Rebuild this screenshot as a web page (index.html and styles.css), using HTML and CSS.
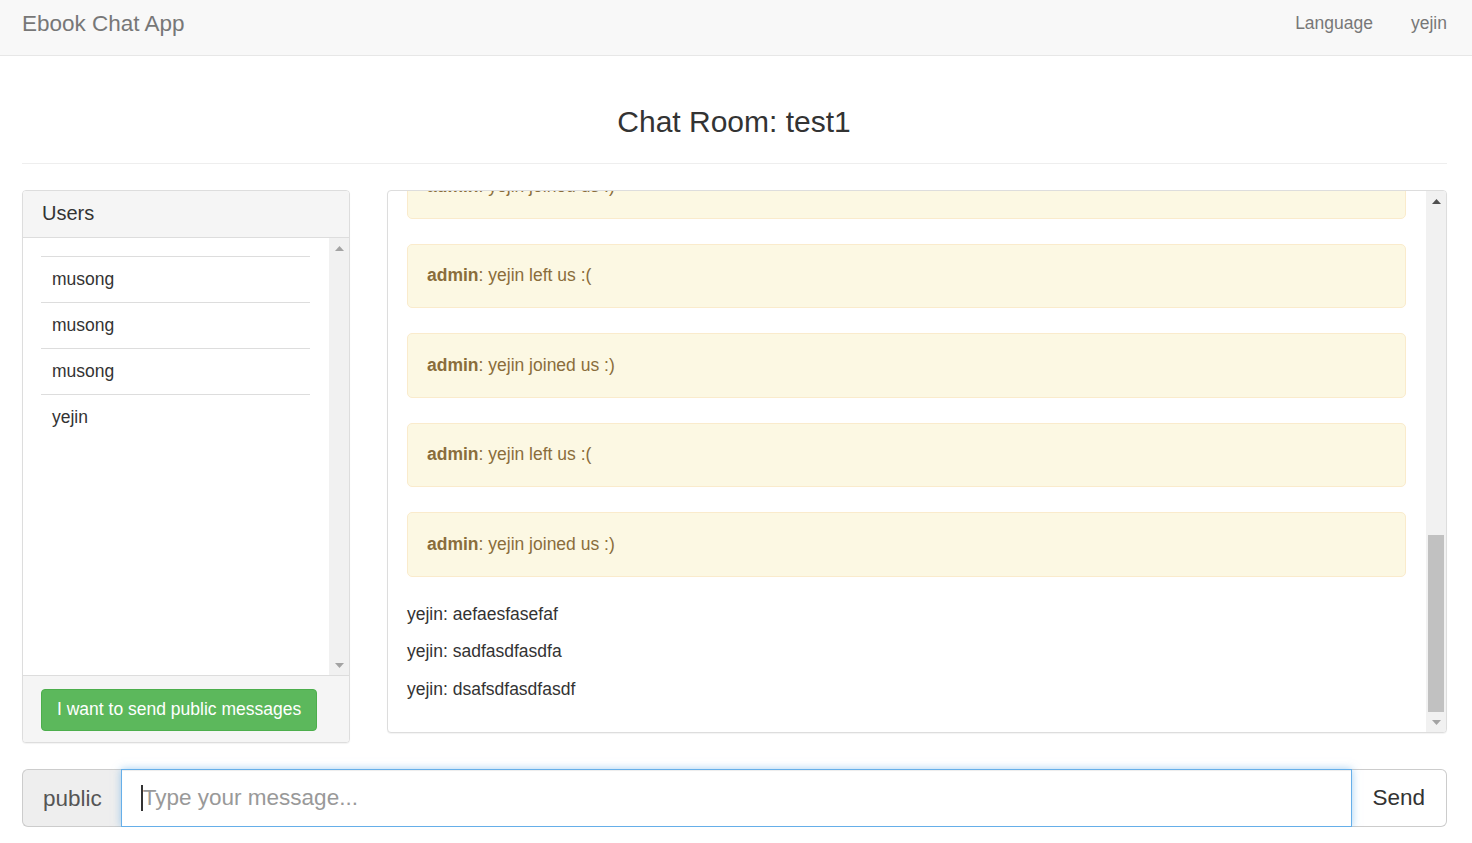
FILE: index.html
```html
<!DOCTYPE html>
<html lang="en">
<head>
<meta charset="utf-8">
<title>Ebook Chat App</title>
<link rel="stylesheet" href="styles.css">
</head>
<body>
<nav class="navbar">
  <a class="brand" href="#">Ebook Chat App</a>
  <ul class="nav-right">
    <li><a href="#">Language</a></li>
    <li><a href="#">yejin</a></li>
  </ul>
</nav>

<main class="page">
  <h3 class="room-title">Chat Room: test1</h3>
  <hr class="divider">

  <div class="chat-row">
    <section class="users-panel">
      <div class="panel-heading">Users</div>
      <div class="users-body">
        <div class="users-list-wrap">
          <ul class="users-list">
            <li>musong</li>
            <li>musong</li>
            <li>musong</li>
            <li>yejin</li>
          </ul>
        </div>
        <div class="fake-scrollbar">
          <div class="sb-btn"><svg width="9" height="5" viewBox="0 0 9 5"><polygon points="0,5 9,5 4.5,0" fill="#a3a3a3"/></svg></div>
          <div class="sb-space"></div>
          <div class="sb-btn"><svg width="9" height="5" viewBox="0 0 9 5"><polygon points="0,0 9,0 4.5,5" fill="#a3a3a3"/></svg></div>
        </div>
      </div>
      <div class="panel-footer">
        <button class="btn-success" type="button">I want to send public messages</button>
      </div>
    </section>

    <section class="messages-box">
      <div class="messages">
        <div class="alert"><strong>admin</strong>: yejin joined us :)</div>
        <div class="alert"><strong>admin</strong>: yejin left us :(</div>
        <div class="alert"><strong>admin</strong>: yejin joined us :)</div>
        <div class="alert"><strong>admin</strong>: yejin left us :(</div>
        <div class="alert"><strong>admin</strong>: yejin joined us :)</div>
        <div class="alert"><strong>admin</strong>: yejin left us :(</div>
        <div class="alert"><strong>admin</strong>: yejin joined us :)</div>
        <p class="msg">yejin: aefaesfasefaf</p>
        <p class="msg">yejin: sadfasdfasdfa</p>
        <p class="msg">yejin: dsafsdfasdfasdf</p>
      </div>
      <div class="fake-scrollbar">
        <div class="sb-btn"><svg width="9" height="5" viewBox="0 0 9 5"><polygon points="0,5 9,5 4.5,0" fill="#505050"/></svg></div>
        <div class="sb-space"></div>
        <div class="sb-thumb"></div>
        <div class="sb-btn"><svg width="9" height="5" viewBox="0 0 9 5"><polygon points="0,0 9,0 4.5,5" fill="#a3a3a3"/></svg></div>
      </div>
    </section>
  </div>

  <form class="input-group" onsubmit="return false;">
    <span class="addon">public</span>
    <input class="msg-input" type="text" placeholder="Type your message...">
    <button class="send-btn" type="submit">Send</button>
  </form>
</main>
</body>
</html>
```

FILE: styles.css
```css
* { box-sizing: border-box; }

html, body {
  margin: 0;
  padding: 0;
  background: #fff;
}

body {
  font-family: "Liberation Sans", Arial, sans-serif;
  font-size: 17.5px;
  line-height: 25px;
  color: #333;
}

a { text-decoration: none; }

/* Navbar */
.navbar {
  height: 56px;
  background: #f8f8f8;
  border-bottom: 1px solid #e7e7e7;
  display: flex;
  justify-content: space-between;
  align-items: flex-start;
  padding: 0 25px 0 22px;
}

.brand {
  font-size: 22.5px;
  line-height: 25px;
  color: #777;
  padding-top: 11px;
}

.nav-right {
  list-style: none;
  margin: 0;
  padding: 0;
  display: flex;
  gap: 38px;
}

.nav-right a {
  display: block;
  color: #777;
  font-size: 17.5px;
  line-height: 25px;
  padding-top: 11px;
}

/* Page */
.page {
  padding: 0 25px 0 22px;
}

.room-title {
  margin: 49px 0 0;
  font-size: 30px;
  line-height: 33px;
  font-weight: 400;
  text-align: center;
  color: #333;
  padding-right: 1px;
}

.divider {
  margin: 25px 0 0;
  border: 0;
  border-top: 1px solid #eee;
  height: 0;
}

.chat-row {
  margin-top: 26px;
  display: grid;
  grid-template-columns: 328px 1fr;
  gap: 37px;
  align-items: start;
}

/* Users panel */
.users-panel {
  border: 1px solid #ddd;
  border-radius: 4px;
  box-shadow: 0 1px 1px rgba(0,0,0,.05);
  overflow: hidden;
  background: #fff;
}

.panel-heading {
  height: 47px;
  line-height: 45px;
  padding: 0 19px;
  font-size: 20px;
  color: #333;
  background: #f5f5f5;
  border-bottom: 1px solid #ddd;
}

.users-body {
  display: flex;
  height: 437px;
}

.users-list-wrap {
  flex: 1;
  padding: 18px 19px 0 18px;
  overflow: hidden;
}

.users-list {
  list-style: none;
  margin: 0;
  padding: 0;
}

.users-list li {
  border-top: 1px solid #ddd;
  padding: 10px 11px;
  line-height: 25px;
  color: #333;
}

.fake-scrollbar {
  width: 20px;
  flex: 0 0 20px;
  background: #f1f1f1;
  display: flex;
  flex-direction: column;
}

.sb-btn {
  height: 20px;
  flex: 0 0 20px;
  display: flex;
  align-items: center;
  justify-content: center;
}

.sb-btn svg { display: block; }

.sb-space { flex: 1; }

.sb-thumb {
  height: 177px;
  margin: 0 2px;
  background: #c1c1c1;
}

.panel-footer {
  background: #f5f5f5;
  border-top: 1px solid #ddd;
  padding: 13px 18px 11px;
}

.btn-success {
  font-family: inherit;
  font-size: 17.5px;
  line-height: 25px;
  color: #fff;
  background: #5cb85c;
  border: 1px solid #4cae4c;
  border-radius: 4px;
  padding: 7px 15px 8px;
  cursor: pointer;
}

/* Messages box */
.messages-box {
  height: 543px;
  border: 1px solid #ddd;
  border-radius: 4px;
  box-shadow: 0 1px 1px rgba(0,0,0,.05);
  display: flex;
  overflow: hidden;
  background: #fff;
}

.messages {
  flex: 1;
  display: flex;
  flex-direction: column;
  justify-content: flex-end;
  overflow: hidden;
  padding: 0 20px 18px 19px;
}

.alert {
  flex: 0 0 auto;
  background: #fcf8e3;
  border: 1px solid #faebcc;
  border-radius: 5px;
  color: #8a6d3b;
  padding: 18.75px 19px;
  margin-bottom: 25px;
  line-height: 25px;
}

.alert strong {
  font-weight: 700;
}

.msg {
  flex: 0 0 auto;
  margin: 0 0 12.5px;
  line-height: 25px;
  color: #333;
}

/* Input group */
.input-group {
  margin: 26px 0 0;
  display: flex;
  height: 58px;
}

.addon {
  display: flex;
  align-items: center;
  padding: 0 19px 0 20px;
  font-size: 22.5px;
  color: #555;
  background: #eee;
  border: 1px solid #ccc;
  border-right: 0;
  border-radius: 6px 0 0 6px;
}

.msg-input {
  flex: 1;
  min-width: 0;
  height: 58px;
  font-family: inherit;
  font-size: 22.5px;
  color: #555;
  padding: 0 20px 0 21px;
  border: 1px solid #66afe9;
  outline: 0;
  background: #fff linear-gradient(#333, #333) no-repeat 19px 15px / 2px 26px;
  box-shadow: inset 0 1px 1px rgba(0,0,0,.075), 0 0 8px rgba(102,175,233,.6);
  position: relative;
  z-index: 2;
}

.msg-input::placeholder {
  color: #999;
  opacity: 1;
}

.send-btn {
  font-family: inherit;
  font-size: 22.5px;
  color: #333;
  background: #fff;
  border: 1px solid #ccc;
  border-left: 0;
  border-radius: 0 6px 6px 0;
  padding: 0 21px 0 20px;
  cursor: pointer;
}
```
